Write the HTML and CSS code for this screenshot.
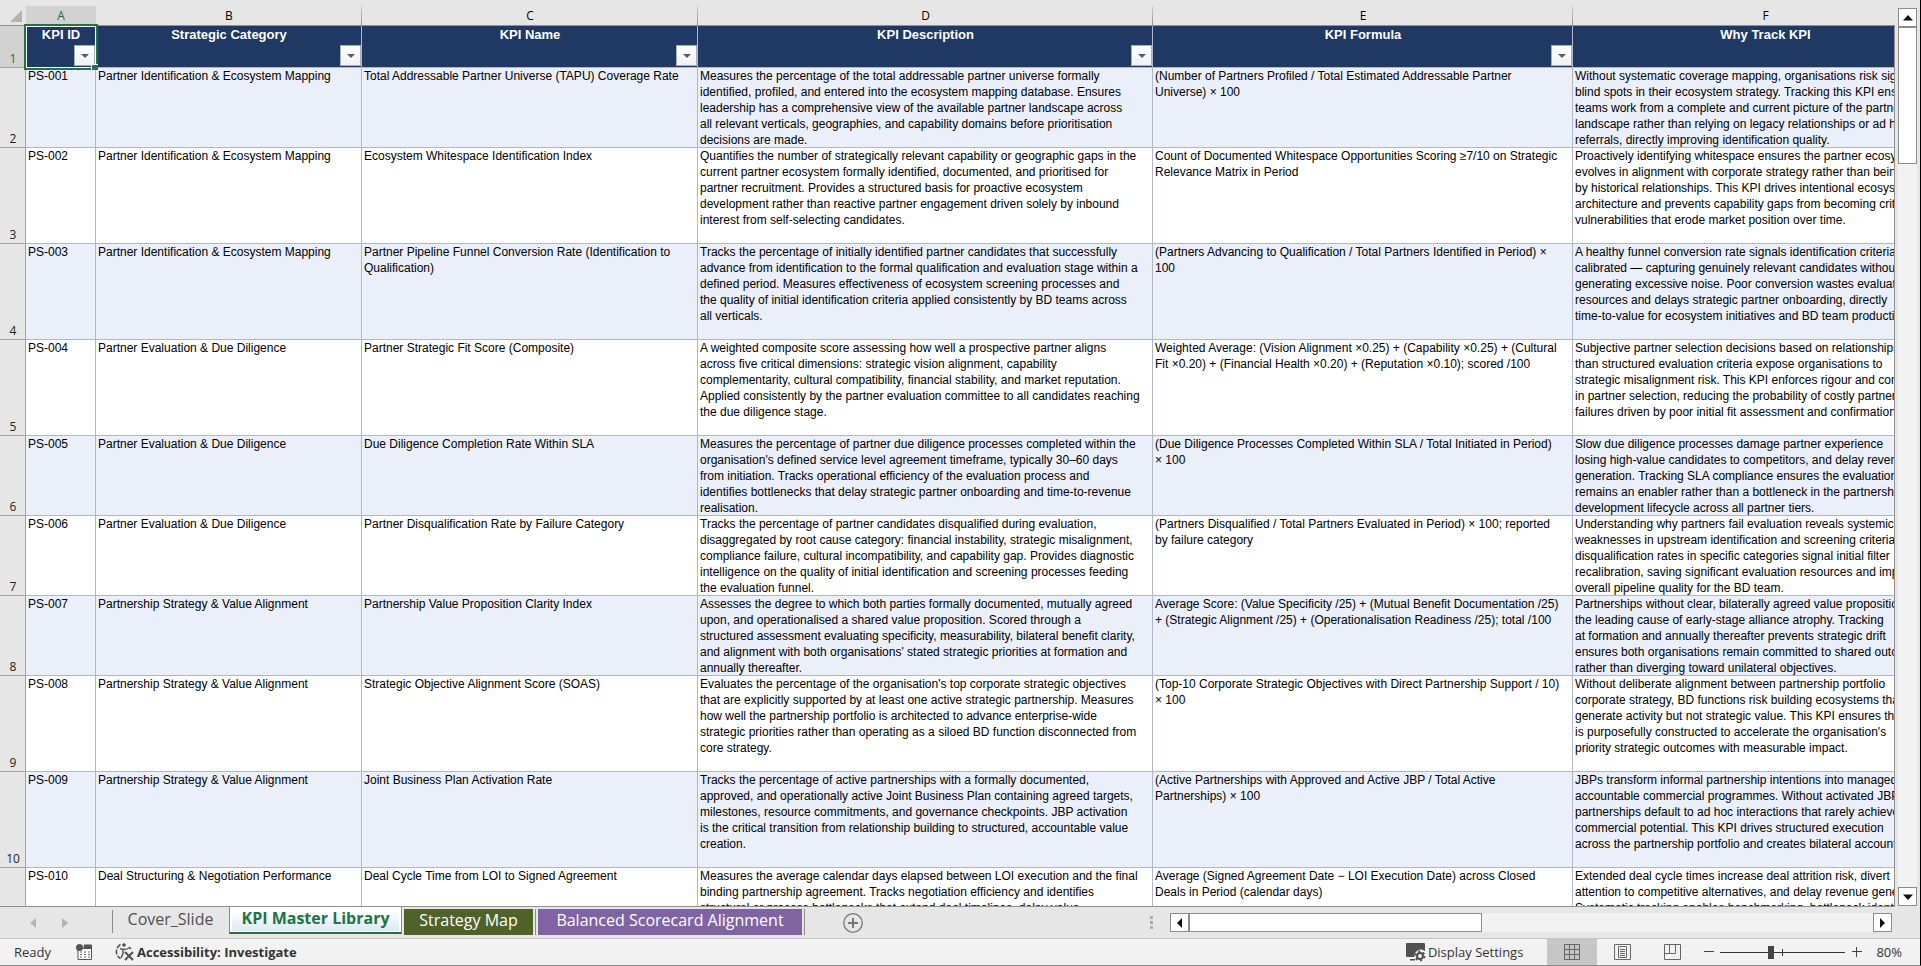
FILE: index.html
```html
<!DOCTYPE html>
<html lang="en">
<head>
    <meta charset="UTF-8">
    <meta name="viewport" content="width=device-width, initial-scale=1.0">
    <title>KPI Master Library</title>
    <link rel="stylesheet" href="styles.css">
</head>
<body>
    <main class="sheet">
        <div class="grid-pane">
            <table class="grid">
                <colgroup>
                    <col class="col-num">
                    <col class="col-a">
                    <col class="col-b">
                    <col class="col-c">
                    <col class="col-d">
                    <col class="col-e">
                    <col class="col-f">
                </colgroup>
                <thead>
                    <tr class="letters">
                        <th class="corner"><svg width="12" height="12" viewBox="0 0 12 12"><path d="M12 0v12H0z" fill="#b4b4b4"/></svg></th>
                        <th class="selected">A</th>
                        <th>B</th>
                        <th>C</th>
                        <th>D</th>
                        <th>E</th>
                        <th>F</th>
                    </tr>
                    <tr class="titles">
                        <th class="num selected">1</th>
                        <th class="active-cell">KPI ID<button class="filter" aria-label="Filter KPI ID"></button></th>
                        <th>Strategic Category<button class="filter" aria-label="Filter Strategic Category"></button></th>
                        <th>KPI Name<button class="filter" aria-label="Filter KPI Name"></button></th>
                        <th>KPI Description<button class="filter" aria-label="Filter KPI Description"></button></th>
                        <th>KPI Formula<button class="filter" aria-label="Filter KPI Formula"></button></th>
                        <th>Why Track KPI<button class="filter" aria-label="Filter Why Track KPI"></button></th>
                    </tr>
                </thead>
                <tbody>
                    <tr class="short">
                        <th class="num">2</th>
                        <td>PS-001</td>
                        <td>Partner Identification &amp; Ecosystem Mapping</td>
                        <td>Total Addressable Partner Universe (TAPU) Coverage Rate</td>
                        <td>Measures the percentage of the total addressable partner universe formally<br>identified, profiled, and entered into the ecosystem mapping database. Ensures<br>leadership has a comprehensive view of the available partner landscape across<br>all relevant verticals, geographies, and capability domains before prioritisation<br>decisions are made.</td>
                        <td>(Number of Partners Profiled / Total Estimated Addressable Partner<br>Universe) × 100</td>
                        <td>Without systematic coverage mapping, organisations risk significant<br>blind spots in their ecosystem strategy. Tracking this KPI ensures<br>teams work from a complete and current picture of the partner<br>landscape rather than relying on legacy relationships or ad hoc<br>referrals, directly improving identification quality.</td>
                    </tr>
                    <tr>
                        <th class="num">3</th>
                        <td>PS-002</td>
                        <td>Partner Identification &amp; Ecosystem Mapping</td>
                        <td>Ecosystem Whitespace Identification Index</td>
                        <td>Quantifies the number of strategically relevant capability or geographic gaps in the<br>current partner ecosystem formally identified, documented, and prioritised for<br>partner recruitment. Provides a structured basis for proactive ecosystem<br>development rather than reactive partner engagement driven solely by inbound<br>interest from self-selecting candidates.</td>
                        <td>Count of Documented Whitespace Opportunities Scoring ≥7/10 on Strategic<br>Relevance Matrix in Period</td>
                        <td>Proactively identifying whitespace ensures the partner ecosystem<br>evolves in alignment with corporate strategy rather than being<br>by historical relationships. This KPI drives intentional ecosystem<br>architecture and prevents capability gaps from becoming critical<br>vulnerabilities that erode market position over time.</td>
                    </tr>
                    <tr>
                        <th class="num">4</th>
                        <td>PS-003</td>
                        <td>Partner Identification &amp; Ecosystem Mapping</td>
                        <td>Partner Pipeline Funnel Conversion Rate (Identification to<br>Qualification)</td>
                        <td>Tracks the percentage of initially identified partner candidates that successfully<br>advance from identification to the formal qualification and evaluation stage within a<br>defined period. Measures effectiveness of ecosystem screening processes and<br>the quality of initial identification criteria applied consistently by BD teams across<br>all verticals.</td>
                        <td>(Partners Advancing to Qualification / Total Partners Identified in Period) ×<br>100</td>
                        <td>A healthy funnel conversion rate signals identification criteria<br>calibrated — capturing genuinely relevant candidates without<br>generating excessive noise. Poor conversion wastes evaluation<br>resources and delays strategic partner onboarding, directly<br>time-to-value for ecosystem initiatives and BD team productivity.</td>
                    </tr>
                    <tr>
                        <th class="num">5</th>
                        <td>PS-004</td>
                        <td>Partner Evaluation &amp; Due Diligence</td>
                        <td>Partner Strategic Fit Score (Composite)</td>
                        <td>A weighted composite score assessing how well a prospective partner aligns<br>across five critical dimensions: strategic vision alignment, capability<br>complementarity, cultural compatibility, financial stability, and market reputation.<br>Applied consistently by the partner evaluation committee to all candidates reaching<br>the due diligence stage.</td>
                        <td>Weighted Average: (Vision Alignment ×0.25) + (Capability ×0.25) + (Cultural<br>Fit ×0.20) + (Financial Health ×0.20) + (Reputation ×0.10); scored /100</td>
                        <td>Subjective partner selection decisions based on relationships<br>than structured evaluation criteria expose organisations to<br>strategic misalignment risk. This KPI enforces rigour and consistency<br>in partner selection, reducing the probability of costly partnership<br>failures driven by poor initial fit assessment and confirmation</td>
                    </tr>
                    <tr class="short">
                        <th class="num">6</th>
                        <td>PS-005</td>
                        <td>Partner Evaluation &amp; Due Diligence</td>
                        <td>Due Diligence Completion Rate Within SLA</td>
                        <td>Measures the percentage of partner due diligence processes completed within the<br>organisation's defined service level agreement timeframe, typically 30–60 days<br>from initiation. Tracks operational efficiency of the evaluation process and<br>identifies bottlenecks that delay strategic partner onboarding and time-to-revenue<br>realisation.</td>
                        <td>(Due Diligence Processes Completed Within SLA / Total Initiated in Period)<br>× 100</td>
                        <td>Slow due diligence processes damage partner experience<br>losing high-value candidates to competitors, and delay revenue<br>generation. Tracking SLA compliance ensures the evaluation<br>remains an enabler rather than a bottleneck in the partnership<br>development lifecycle across all partner tiers.</td>
                    </tr>
                    <tr class="short">
                        <th class="num">7</th>
                        <td>PS-006</td>
                        <td>Partner Evaluation &amp; Due Diligence</td>
                        <td>Partner Disqualification Rate by Failure Category</td>
                        <td>Tracks the percentage of partner candidates disqualified during evaluation,<br>disaggregated by root cause category: financial instability, strategic misalignment,<br>compliance failure, cultural incompatibility, and capability gap. Provides diagnostic<br>intelligence on the quality of initial identification and screening processes feeding<br>the evaluation funnel.</td>
                        <td>(Partners Disqualified / Total Partners Evaluated in Period) × 100; reported<br>by failure category</td>
                        <td>Understanding why partners fail evaluation reveals systemic<br>weaknesses in upstream identification and screening criteria.<br>disqualification rates in specific categories signal initial filter<br>recalibration, saving significant evaluation resources and improving<br>overall pipeline quality for the BD team.</td>
                    </tr>
                    <tr class="short">
                        <th class="num">8</th>
                        <td>PS-007</td>
                        <td>Partnership Strategy &amp; Value Alignment</td>
                        <td>Partnership Value Proposition Clarity Index</td>
                        <td>Assesses the degree to which both parties formally documented, mutually agreed<br>upon, and operationalised a shared value proposition. Scored through a<br>structured assessment evaluating specificity, measurability, bilateral benefit clarity,<br>and alignment with both organisations' stated strategic priorities at formation and<br>annually thereafter.</td>
                        <td>Average Score: (Value Specificity /25) + (Mutual Benefit Documentation /25)<br>+ (Strategic Alignment /25) + (Operationalisation Readiness /25); total /100</td>
                        <td>Partnerships without clear, bilaterally agreed value propositions<br>the leading cause of early-stage alliance atrophy. Tracking<br>at formation and annually thereafter prevents strategic drift<br>ensures both organisations remain committed to shared outcomes<br>rather than diverging toward unilateral objectives.</td>
                    </tr>
                    <tr>
                        <th class="num">9</th>
                        <td>PS-008</td>
                        <td>Partnership Strategy &amp; Value Alignment</td>
                        <td>Strategic Objective Alignment Score (SOAS)</td>
                        <td>Evaluates the percentage of the organisation's top corporate strategic objectives<br>that are explicitly supported by at least one active strategic partnership. Measures<br>how well the partnership portfolio is architected to advance enterprise-wide<br>strategic priorities rather than operating as a siloed BD function disconnected from<br>core strategy.</td>
                        <td>(Top-10 Corporate Strategic Objectives with Direct Partnership Support / 10)<br>× 100</td>
                        <td>Without deliberate alignment between partnership portfolio<br>corporate strategy, BD functions risk building ecosystems that<br>generate activity but not strategic value. This KPI ensures the<br>is purposefully constructed to accelerate the organisation's<br>priority strategic outcomes with measurable impact.</td>
                    </tr>
                    <tr>
                        <th class="num">10</th>
                        <td>PS-009</td>
                        <td>Partnership Strategy &amp; Value Alignment</td>
                        <td>Joint Business Plan Activation Rate</td>
                        <td>Tracks the percentage of active partnerships with a formally documented,<br>approved, and operationally active Joint Business Plan containing agreed targets,<br>milestones, resource commitments, and governance checkpoints. JBP activation<br>is the critical transition from relationship building to structured, accountable value<br>creation.</td>
                        <td>(Active Partnerships with Approved and Active JBP / Total Active<br>Partnerships) × 100</td>
                        <td>JBPs transform informal partnership intentions into managed,<br>accountable commercial programmes. Without activated JBPs,<br>partnerships default to ad hoc interactions that rarely achieve<br>commercial potential. This KPI drives structured execution<br>across the partnership portfolio and creates bilateral accountability</td>
                    </tr>
                    <tr>
                        <th class="num"></th>
                        <td>PS-010</td>
                        <td>Deal Structuring &amp; Negotiation Performance</td>
                        <td>Deal Cycle Time from LOI to Signed Agreement</td>
                        <td>Measures the average calendar days elapsed between LOI execution and the final<br>binding partnership agreement. Tracks negotiation efficiency and identifies<br>structural or process bottlenecks that extend deal timelines, delay value</td>
                        <td>Average (Signed Agreement Date − LOI Execution Date) across Closed<br>Deals in Period (calendar days)</td>
                        <td>Extended deal cycle times increase deal attrition risk, divert<br>attention to competitive alternatives, and delay revenue generation.<br>Systematic tracking enables benchmarking, bottleneck identification</td>
                    </tr>
                </tbody>
            </table>
        </div>
        <div class="v-scroll">
            <button class="scroll-btn" aria-label="Scroll up"><svg width="10" height="6" viewBox="0 0 10 6"><path d="M5 0l5 5.500H0z"/></svg></button>
            <div class="v-thumb"></div>
            <button class="scroll-btn v-end" aria-label="Scroll down"><svg width="10" height="6" viewBox="0 0 10 6"><path d="M0 .5h10L5 6z"/></svg></button>
        </div>
    </main>

    <nav class="tab-bar">
        <button class="nav-arrow" aria-label="Previous sheet"><svg width="6" height="10" viewBox="0 0 6 10"><path d="M6 0v10L0 5z"/></svg></button>
        <button class="nav-arrow" aria-label="Next sheet"><svg width="6" height="10" viewBox="0 0 6 10"><path d="M0 0v10l6-5z"/></svg></button>
        <div class="tabs">
            <button class="tab cover">Cover_Slide</button>
            <button class="tab current">KPI Master Library</button>
            <button class="tab green">Strategy Map</button>
            <button class="tab purple">Balanced Scorecard Alignment</button>
        </div>
        <button class="add-sheet" aria-label="New sheet"><svg width="20" height="20" viewBox="0 0 20 20" fill="none" stroke="#777"><circle cx="10" cy="10" r="9.300" stroke-width="1.300"/><path d="M10 5v10M5 10h10" stroke-width="2"/></svg></button>
        <div class="splitter"><i></i><i></i><i></i></div>
        <div class="h-scroll">
            <button class="scroll-btn" aria-label="Scroll left"><svg width="5" height="10" viewBox="0 0 5 10"><path d="M5 0v10L0 5z"/></svg></button>
            <div class="h-thumb"></div>
            <button class="scroll-btn h-end" aria-label="Scroll right"><svg width="5" height="10" viewBox="0 0 5 10"><path d="M0 0v10l5-5z"/></svg></button>
        </div>
    </nav>

    <footer class="status-bar">
        <span class="ready">Ready</span>
        <button class="macro" aria-label="Record macro">
            <svg width="16" height="16" viewBox="0 0 16 16"><path d="M2 6v9.500h13.500V1H8" fill="#fff" stroke="#555"/><path d="M8 1h8v4H7z" fill="#555"/><circle cx="3.500" cy="3.500" r="3.500" fill="#555"/><path d="M4 8h2M8 8h2M12 8h2M4 10.500h2M8 10.500h2M12 10.500h2M4 13h2M8 13h2M12 13h2" stroke="#666"/></svg>
        </button>
        <button class="access">
            <svg width="20" height="18" viewBox="0 0 20 18" fill="none" stroke="#555"><path d="M5.500 1.500A8 8 0 0 0 5.500 15.500" stroke-width="1.600" stroke-dasharray="5 1.500"/><circle cx="9" cy="2" r="1.300" fill="#555"/><path d="M5 5.500c2 1 3 1 4 1s3 0 6-2M8 6.500v4l-2 4.500M14 4l2 2" stroke-width="1.500"/><path d="M10 9l8 8M18 9l-8 8" stroke-width="2.200"/></svg>
            Accessibility: Investigate
        </button>
        <button class="display">
            <svg width="20" height="19" viewBox="0 0 20 19"><path d="M1 0h17q1 0 1 1v7a6.500 6.500 0 0 0-10.500 6H1q-1 0-1-1V1q0-1 1-1zM4 16h5v1.500H4z" fill="#505050"/><circle cx="14" cy="13" r="3" fill="none" stroke="#505050" stroke-width="2"/><circle cx="14" cy="13" r="4.700" fill="none" stroke="#505050" stroke-width="1.600" stroke-dasharray="2.200 2.720"/></svg>
            Display Settings
        </button>
        <button class="view on" aria-label="Normal view"><svg width="16" height="16" viewBox="0 0 16 16" fill="none" stroke="#666"><path d="M.5.5h15v15H.5zM5.500 0v16M10.500 0v16M0 5.500h16M0 10.500h16"/></svg></button>
        <button class="view" aria-label="Page layout"><svg width="17" height="16" viewBox="0 0 17 16" fill="none" stroke="#666"><path d="M.5.5h16v15H.5zM4.500 2.500h8v11h-8zM6 5.500h5M6 7.500h5M6 9.500h5M6 11.500h5"/></svg></button>
        <button class="view" aria-label="Page break preview"><svg width="17" height="16" viewBox="0 0 17 16" fill="none" stroke="#666"><path d="M.5.5h16v15H.5zM.5 9.500h11V.5M5.500.5v9"/></svg></button>
        <button class="zoom-btn" aria-label="Zoom out"><svg width="10" height="10" viewBox="0 0 10 10"><path d="M0 4.500h10" stroke="#444"/></svg></button>
        <input class="zoom" type="range" min="10" max="190" value="82" aria-label="Zoom">
        <button class="zoom-btn" aria-label="Zoom in"><svg width="10" height="10" viewBox="0 0 10 10"><path d="M0 4.500h10M4.500 0v10" stroke="#444"/></svg></button>
        <span class="percent">80%</span>
    </footer>
</body>
</html>
```

FILE: styles.css
```css
* {
    box-sizing: border-box;
}

body {
    margin: 0;
    height: 100vh;
    display: flex;
    flex-direction: column;
    overflow: hidden;
    background-color: #e6e6e6;
    border-right: 1px solid #000;
    border-bottom: 1px solid #8c8c8c;
    font-family: "Open Sans", "Noto Sans", sans-serif;
    color: #333;
}

button {
    border: none;
    background: none;
    padding: 0;
    font: inherit;
    color: inherit;
}

svg {
    display: block;
    flex: none;
}

/* Sheet */
.sheet {
    flex: 1;
    min-height: 0;
    display: flex;
}

.grid-pane {
    position: relative;
    flex: 1;
    min-width: 0;
    overflow: hidden;
    border-bottom: 1px solid #919191;
}

.grid-pane::after {
    content: "";
    position: absolute;
    top: 25px;
    right: 0;
    bottom: 0;
    width: 1px;
    background-color: #919191;
}

.grid {
    table-layout: fixed;
    width: 1958px;
    border-spacing: 0;
    font-family: "Liberation Sans", Arial, sans-serif;
    font-size: 12px;
    line-height: 16px;
    color: #000;
}

.col-num { width: 26px; }
.col-a { width: 70px; }
.col-b { width: 266px; }
.col-c { width: 336px; }
.col-d { width: 455px; }
.col-e { width: 420px; }
.col-f { width: 385px; }

.grid th,
.grid td {
    padding: 0 2px;
    vertical-align: top;
    text-align: left;
    white-space: nowrap;
    box-shadow: inset -1px -1px 0 #b0b7c8;
}

.grid tbody tr {
    height: 96px;
    background-color: #fff;
}

.grid tbody tr.short {
    height: 80px;
}

.grid tbody tr:nth-child(odd) {
    background-color: #eaeffa;
}

.grid .letters {
    height: 26px;
}

.grid .letters th {
    padding: 6px 0 0;
    font-family: "Open Sans", "Noto Sans", sans-serif;
    font-size: 12px;
    font-weight: normal;
    line-height: 19px;
    text-align: center;
    box-shadow: none;
    border-bottom: 1px solid #919191;
    background: linear-gradient(#d0d0d0, #919191) right bottom / 1px 19px no-repeat #e6e6e6;
}

.grid .letters .corner {
    padding: 10px 0 0 10px;
    background-image: none;
}

.grid .letters .selected {
    color: #1e6b41;
    background: linear-gradient(#e6e6e6 6px, #d2d2d2 6px);
}

.grid .num {
    padding: 0 0 1px;
    font-family: "Open Sans", "Noto Sans", sans-serif;
    font-size: 12px;
    font-weight: normal;
    vertical-align: bottom;
    text-align: center;
    color: #222;
    background-color: #e6e6e6;
    box-shadow: inset -1px -1px 0 #a3a3a3;
}

.grid .num.selected {
    color: #1e6b41;
    background-color: #d2d2d2;
}

.grid .titles {
    height: 42px;
}

.grid .titles th:not(.num) {
    position: relative;
    background-color: #203864;
    color: #fff;
    font-size: 13px;
    line-height: 17px;
    text-align: center;
}

.filter {
    position: absolute;
    right: 1px;
    bottom: 2px;
    width: 21px;
    height: 21px;
    border: 1px solid #a9aeb9;
    background: linear-gradient(#fff, #eef1f6);
}

.filter::after {
    content: "";
    position: absolute;
    left: 6px;
    top: 8px;
    border: 4px solid transparent;
    border-top-color: #5c5c5c;
    border-bottom: none;
}

.active-cell::before {
    content: "";
    position: absolute;
    inset: 0;
    border: 1px solid #fff;
    outline: 2px solid #217346;
    z-index: 1;
    pointer-events: none;
}

.active-cell::after {
    content: "";
    position: absolute;
    right: -2px;
    bottom: -2px;
    width: 6px;
    height: 5px;
    border: solid #fff;
    border-width: 1px 0 0 1px;
    background-color: #217346;
    z-index: 2;
}

/* Scroll bars */
.scroll-btn {
    display: flex;
    align-items: center;
    justify-content: center;
    flex: none;
    width: 19px;
    height: 19px;
    border: 1px solid #8c8c8c;
    background-color: #fff;
    fill: #111;
}

.v-scroll {
    flex: none;
    display: flex;
    flex-direction: column;
    width: 19px;
    margin: 8px 3px 1px;
    background-color: #f2f2f2;
}

.v-thumb {
    height: 137px;
    border: 1px solid #8c8c8c;
    background-color: #fff;
}

.v-end {
    margin-top: auto;
}

/* Sheet tabs */
.tab-bar {
    flex: none;
    display: flex;
    align-items: center;
    height: 32px;
    border-bottom: 1px solid #c6c6c6;
}

.nav-arrow {
    width: 6px;
    margin-left: 30px;
    fill: #b4b4b4;
}

.nav-arrow + .nav-arrow {
    margin-left: 26px;
}

.tabs {
    display: flex;
    align-self: flex-start;
    margin-left: 44px;
    font-size: 16px;
    line-height: 22px;
}

.tab {
    height: 26px;
    padding-bottom: 2px;
    text-align: center;
    white-space: nowrap;
}

.cover {
    position: relative;
    width: 117px;
    color: #505050;
}

.cover::before {
    content: "";
    position: absolute;
    left: 0;
    top: 3px;
    bottom: 0;
    width: 1px;
    background-color: #8c8c8c;
}

.current {
    width: 173px;
    height: 28px;
    margin-top: -1px;
    border: 1px solid #8c8c8c;
    border-top: none;
    border-bottom: 2px solid #217346;
    background: linear-gradient(#fff 20%, #dde6f2);
    box-shadow: inset 2px -1px 0 #fff, inset -2px 0 0 #fff;
    font-weight: bold;
    color: #217346;
}

.green,
.purple {
    margin: 2px 2px 0;
    padding-bottom: 6px;
    color: #fff;
}

.green {
    width: 129px;
    background-color: #4f6228;
}

.purple {
    width: 264px;
    margin-left: 3px;
    background-color: #8064a2;
    box-shadow: -2px 0 0 #e6e6e6, -3px 0 0 #8c8c8c, 2px 0 0 #e6e6e6, 3px 0 0 #8c8c8c;
}

.add-sheet {
    margin-left: 39px;
}

.splitter {
    display: flex;
    flex-direction: column;
    gap: 2px;
    margin-left: auto;
}

.splitter i {
    width: 3px;
    height: 3px;
    background-color: #aaa;
}

.h-scroll {
    display: flex;
    flex: none;
    width: 722px;
    margin: 0 28px 0 17px;
    background-color: #f2f2f2;
}

.h-thumb {
    width: 293px;
    border: 1px solid #8c8c8c;
    background-color: #fff;
}

.h-end {
    margin-left: auto;
}

/* Status bar */
.status-bar {
    flex: none;
    display: flex;
    align-items: center;
    height: 26px;
    background-color: #f2f2f2;
    font-size: 13px;
}

.ready {
    margin-left: 14px;
}

.macro {
    margin-left: 25px;
}

.access,
.display {
    display: flex;
    align-items: center;
    gap: 2px;
    white-space: nowrap;
}

.access {
    margin-left: 23px;
    font-weight: bold;
}

.display {
    margin-left: auto;
    margin-right: 24px;
}

.view {
    display: flex;
    align-items: center;
    justify-content: center;
    width: 50px;
    height: 26px;
}

.view.on {
    background-color: #c6c6c6;
}

.zoom-btn {
    margin-left: 7px;
}

.zoom {
    appearance: none;
    width: 125px;
    height: 13px;
    margin: 0 0 0 6px;
    background: linear-gradient(#333, #333) 62px 50% / 1px 7px no-repeat, linear-gradient(#333, #333) 0 50% / 100% 1px no-repeat;
}

.zoom::-webkit-slider-thumb {
    appearance: none;
    width: 6px;
    height: 13px;
    background-color: #444;
}

.percent {
    margin: 0 18px 0 14px;
}
```
